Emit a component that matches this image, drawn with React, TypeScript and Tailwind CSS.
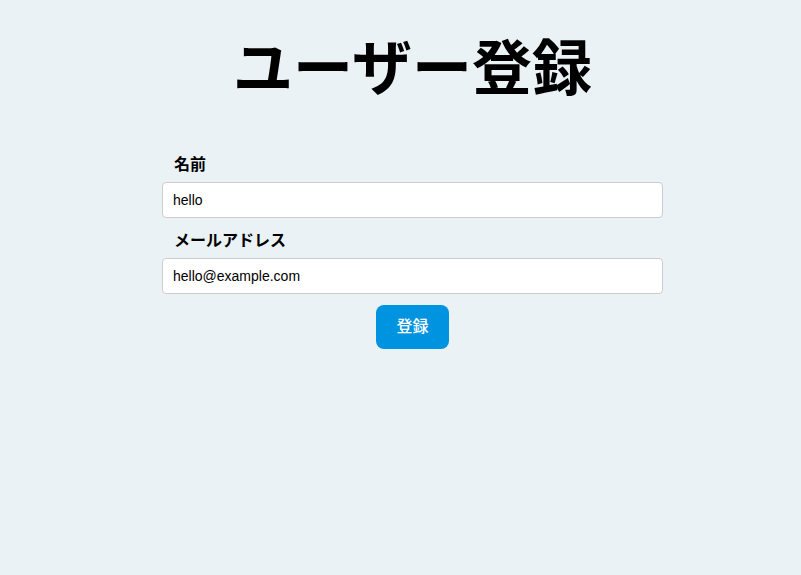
import React, { useState } from 'react';

const jp = "font-['Liberation_Sans','Noto_Sans_CJK_JP',sans-serif]";

const Field: React.FC<{
  label: string;
  type: string;
  value: string;
  onChange: (v: string) => void;
}> = ({ label, type, value, onChange }) => {
  return (
    <div className="flex flex-col">
      <label className="pl-3 mb-[5px] text-base leading-6 font-bold text-black">{label}</label>
      <input
        type={type}
        value={value}
        onChange={(e) => onChange(e.target.value)}
        className="h-9 w-full rounded-[4px] border border-[#cccccc] bg-white px-[10px] text-[14px] text-black outline-none"
      />
    </div>
  );
};

const App: React.FC = () => {
  const [name, setName] = useState('hello');
  const [email, setEmail] = useState('hello@example.com');

  return (
    <div className={`min-h-[575px] w-full bg-[#eaf2f6] pl-6 ${jp}`}>
      <div className="mx-auto flex w-[501px] flex-col pt-[40px]">
        <h1 className="mb-[53px] text-center text-6xl leading-none font-bold text-black">ユーザー登録</h1>
        <form className="flex flex-col gap-[11px]" onSubmit={(e) => e.preventDefault()}>
          <Field label="名前" type="text" value={name} onChange={setName} />
          <Field label="メールアドレス" type="email" value={email} onChange={setEmail} />
          <div className="flex justify-center">
            <button
              type="submit"
              className="rounded-lg bg-[#0093e0] px-5 py-[10px] text-base leading-6 font-medium text-white"
            >
              登録
            </button>
          </div>
        </form>
      </div>
    </div>
  );
};

export default App;
